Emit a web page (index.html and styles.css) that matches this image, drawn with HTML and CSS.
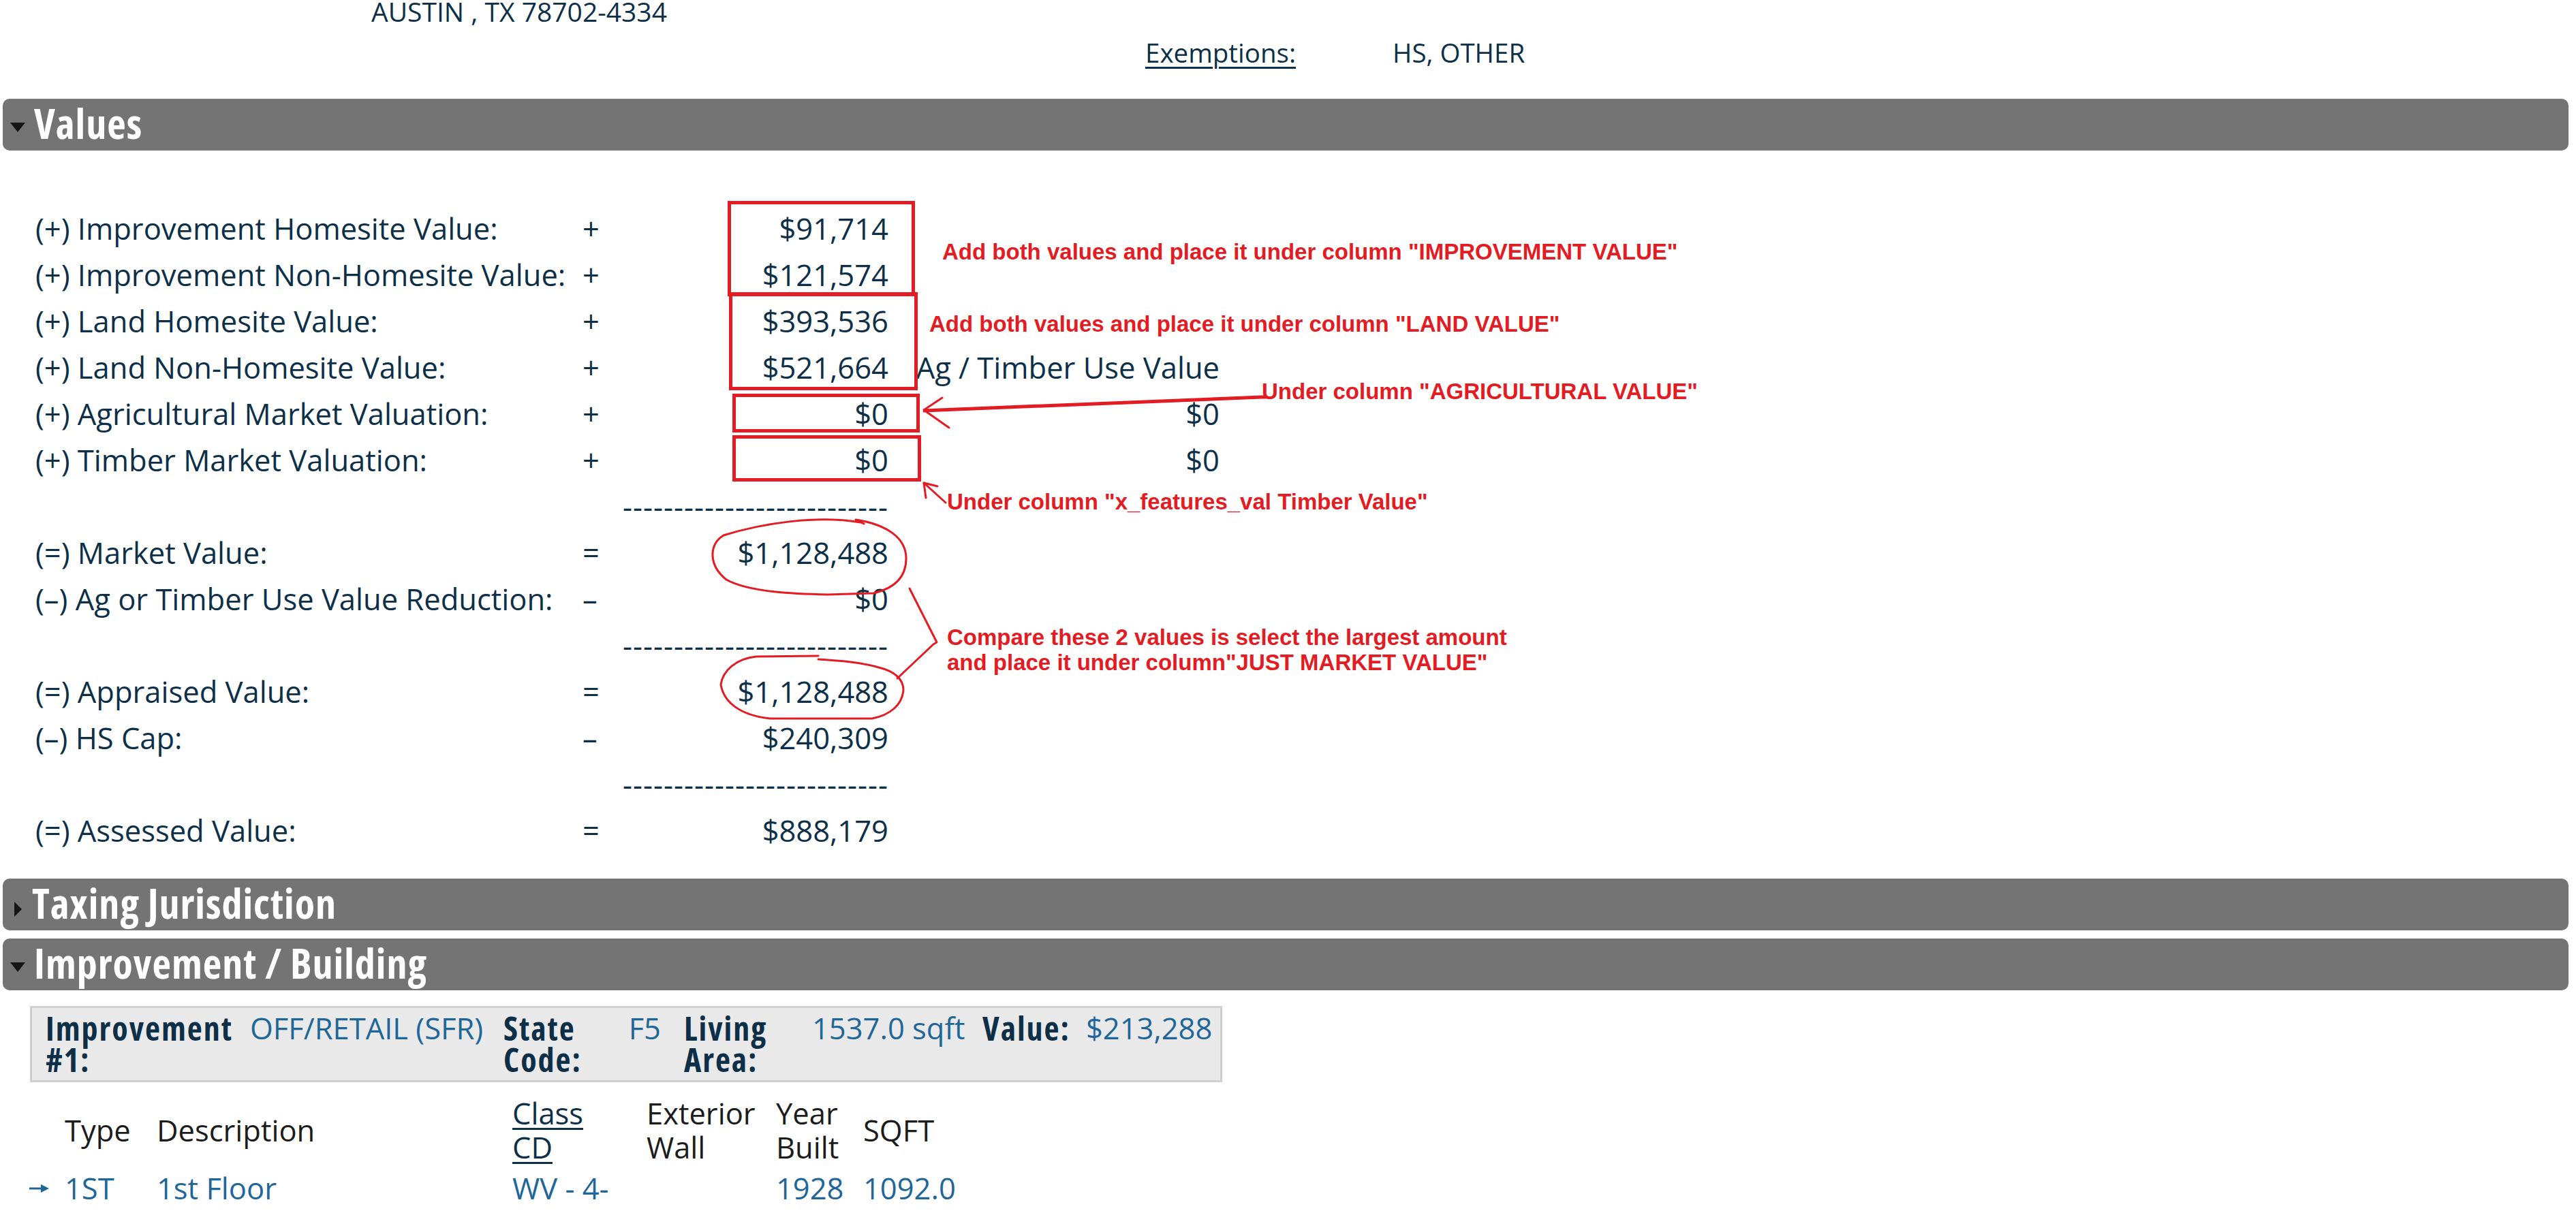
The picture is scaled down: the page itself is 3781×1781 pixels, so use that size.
FILE: index.html
```html
<!DOCTYPE html>
<html lang="en">
<head>
<meta charset="utf-8">
<title>Property Values</title>
<link rel="stylesheet" href="styles.css">
</head>
<body>
<div class="page">
  <div class="addr">AUSTIN , TX 78702-4334</div>
  <div class="exrow"><span class="exlabel">Exemptions:</span><span class="exval">HS, OTHER</span></div>

  <section class="panel">
    <div class="bar bar-values"><span class="tri-down"></span><h2>Values</h2></div>
    <div class="vtable">
      <div class="vrow"><span>(+) Improvement Homesite Value:</span><span class="op">+</span><span class="amt">$91,714</span><span class="extra"></span></div>
      <div class="vrow"><span>(+) Improvement Non-Homesite Value:</span><span class="op">+</span><span class="amt">$121,574</span><span class="extra"></span></div>
      <div class="vrow"><span>(+) Land Homesite Value:</span><span class="op">+</span><span class="amt">$393,536</span><span class="extra"></span></div>
      <div class="vrow"><span>(+) Land Non-Homesite Value:</span><span class="op">+</span><span class="amt">$521,664</span><span class="extra">Ag / Timber Use Value</span></div>
      <div class="vrow"><span>(+) Agricultural Market Valuation:</span><span class="op">+</span><span class="amt">$0</span><span class="extra">$0</span></div>
      <div class="vrow"><span>(+) Timber Market Valuation:</span><span class="op">+</span><span class="amt">$0</span><span class="extra">$0</span></div>
      <div class="vrow"><span></span><span class="op"></span><span class="amt dash">--------------------------</span><span class="extra"></span></div>
      <div class="vrow"><span>(=) Market Value:</span><span class="op">=</span><span class="amt">$1,128,488</span><span class="extra"></span></div>
      <div class="vrow"><span>(–) Ag or Timber Use Value Reduction:</span><span class="op">–</span><span class="amt">$0</span><span class="extra"></span></div>
      <div class="vrow"><span></span><span class="op"></span><span class="amt dash">--------------------------</span><span class="extra"></span></div>
      <div class="vrow"><span>(=) Appraised Value:</span><span class="op">=</span><span class="amt">$1,128,488</span><span class="extra"></span></div>
      <div class="vrow"><span>(–) HS Cap:</span><span class="op">–</span><span class="amt">$240,309</span><span class="extra"></span></div>
      <div class="vrow"><span></span><span class="op"></span><span class="amt dash">--------------------------</span><span class="extra"></span></div>
      <div class="vrow"><span>(=) Assessed Value:</span><span class="op">=</span><span class="amt">$888,179</span><span class="extra"></span></div>
    </div>
  </section>

  <section class="panel">
    <div class="bar bar-taxing"><span class="tri-right"></span><h2>Taxing Jurisdiction</h2></div>
  </section>

  <section class="panel">
    <div class="bar bar-impr"><span class="tri-down"></span><h2>Improvement / Building</h2></div>
    <div class="impbox">
      <div class="c c1 b">Improvement #1:</div>
      <div class="c c2 lnk">OFF/RETAIL (SFR)</div>
      <div class="c c3 b">State Code:</div>
      <div class="c c4 lnk">F5</div>
      <div class="c c5 b">Living Area:</div>
      <div class="c c6 lnk">1537.0 sqft</div>
      <div class="c c7 b">Value:</div>
      <div class="c c8 lnk">$213,288</div>
    </div>
    <div class="btable">
      <div class="brow bhead">
        <span></span>
        <span>Type</span>
        <span>Description</span>
        <span class="ulink">Class<br>CD</span>
        <span>Exterior<br>Wall</span>
        <span>Year<br>Built</span>
        <span>SQFT</span>
      </div>
      <div class="brow bdata">
        <span class="arrow"><svg width="31" height="14" viewBox="0 0 31 14"><path d="M1 7 H20" stroke="#1f6699" stroke-width="3"/><path d="M18 1 L30 7 L18 13 Z" fill="#1f6699"/></svg></span>
        <span>1ST</span>
        <span>1st Floor</span>
        <span>WV - 4-</span>
        <span></span>
        <span>1928</span>
        <span>1092.0</span>
      </div>
    </div>
  </section>
</div>

<div class="notes">
  <svg class="marks" width="3781" height="1781" viewBox="0 0 3781 1781">
    <g fill="none" stroke="#e31b23" stroke-width="5">
      <rect x="1070.5" y="297.5" width="270" height="135"/>
      <rect x="1072.5" y="431.5" width="272" height="139"/>
      <rect x="1077.5" y="580.5" width="270" height="52"/>
      <rect x="1077.5" y="641.5" width="272" height="63"/>
      <path d="M1355 603 L1852 583 L1858 583"/>
    </g>
    <g fill="none" stroke="#e31b23" stroke-width="3" stroke-linecap="round" stroke-linejoin="round">
      <path d="M1383 584 L1356 602 L1393 628"/>
      <path d="M1356 709 L1388 738"/>
      <path d="M1359 731 L1356 709 L1376 714"/>
      <path d="M1335 864 L1375 943 L1370 946 L1317 996"/>
      <path d="M1263 767 C1200 756 1120 768 1062 786 C1040 800 1040 830 1066 851 C1100 870 1170 872 1215 873 L1282 871 C1312 864 1330 848 1330 820 C1330 790 1302 770 1256 763 L1268 769"/>
      <path d="M1201 963 L1110 964 C1080 967 1061 985 1058 1005 C1062 1031 1086 1050 1130 1055 L1280 1055 C1306 1050 1325 1035 1326 1012 C1325 995 1310 985 1290 980 C1262 972 1232 970 1201 968"/>
    </g>
  </svg>
  <div class="note n1">Add both values and place it under column "IMPROVEMENT VALUE"</div>
  <div class="note n2">Add both values and place it under column "LAND VALUE"</div>
  <div class="note n3">Under column "AGRICULTURAL VALUE"</div>
  <div class="note n4">Under column "x_features_val Timber Value"</div>
  <div class="note n5">Compare these 2 values is select the largest amount<br>and place it under column"JUST MARKET VALUE"</div>
</div>
</body>
</html>
```

FILE: styles.css
```css
html, body {
  margin: 0;
  padding: 0;
  background: #ffffff;
  overflow: hidden;
}
body {
  font-family: "Open Sans", "Noto Sans", sans-serif;
  color: #0d2f48;
  position: relative;
}
.page {
  width: 3781px;
}

/* top address area */
.addr {
  height: 34px;
  line-height: 34px;
  font-size: 39px;
  padding-left: 545px;
  white-space: nowrap;
}
.exrow {
  margin-top: 13px;
  height: 60px;
  line-height: 60px;
  font-size: 38.5px;
  display: flex;
  padding-left: 1681px;
  white-space: nowrap;
}
.exlabel {
  width: 363px;
  text-decoration: underline;
  text-decoration-thickness: 3px;
  text-underline-offset: 6px;
}

/* section header bars */
.bar {
  display: flex;
  align-items: center;
  height: 76px;
  margin: 0 11px 0 4px;
  background: #747474;
  border-radius: 10px;
  padding-left: 11px;
}
.bar h2 {
  margin: 0 0 5px 15px;
  font-size: 60px;
  font-weight: 700;
  font-stretch: 75%;
  letter-spacing: 1px;
  color: #ffffff;
  line-height: 68px;
  white-space: nowrap;
}
.tri-down {
  width: 0;
  height: 0;
  border-left: 11px solid transparent;
  border-right: 11px solid transparent;
  border-top: 14px solid #151515;
  margin-top: 7px;
}
.tri-right {
  width: 0;
  height: 0;
  border-top: 11px solid transparent;
  border-bottom: 11px solid transparent;
  border-left: 11px solid #151515;
  margin: 14px 4px 0 6px;
}
.bar-values { margin-top: 38px; }
.bar-taxing { margin-top: 36px; }
.bar-taxing h2 { margin-left: 11px; }
.bar-impr { margin-top: 12px; }
.bar-values h2, .bar-impr h2 { margin-left: 13px; }

/* values table */
.vtable {
  margin: 81px 0 0 52px;
  font-size: 43.5px;
}
.vrow {
  display: grid;
  grid-template-columns: 803px 50px 399px 486px;
  height: 68px;
  line-height: 68px;
  white-space: nowrap;
}
.amt, .extra { text-align: right; }
.dash { letter-spacing: 1px; }

/* improvement summary box */
.impbox {
  margin: 23px 0 0 44px;
  width: fit-content;
  display: flex;
  align-items: flex-start;
  background: #e9e9e9;
  border: 3px solid #cfcfcf;
  padding: 7px 12px 7px 20px;
  font-size: 43.5px;
  line-height: 46px;
}
.c { flex: none; }
.b { font-weight: 700; font-stretch: 75%; font-size: 48px; letter-spacing: 2px; }
.lnk { color: #1f6699; white-space: nowrap; }
.c1 { width: 300px; }
.c2 { width: 372px; }
.c3 { width: 126px; }
.c4 { width: 105px; padding-right: 34px; text-align: right; }
.c5 { width: 188px; }
.c6 { width: 250px; }
.c7 { width: 152px; white-space: nowrap; }

/* building table */
.btable {
  margin: 21px 0 0 42px;
  font-size: 43.5px;
}
.brow {
  display: grid;
  grid-template-columns: 53px 135px 522px 197px 190px 128px 200px;
  line-height: 50px;
  white-space: nowrap;
}
.bhead {
  height: 100px;
  align-items: center;
  color: #1c1c1c;
}
.ulink {
  color: #0d2f48;
  text-decoration: underline;
  text-decoration-thickness: 3px;
  text-underline-offset: 5px;
}
.bdata {
  margin-top: 10px;
  height: 50px;
  align-items: center;
  color: #1f6699;
}
.arrow {
  display: flex;
  align-items: center;
}
.arrow svg { display: block; }

/* red annotation overlay */
.notes {
  position: absolute;
  left: 0;
  top: 0;
  width: 3781px;
  height: 1781px;
  pointer-events: none;
}
.marks {
  position: absolute;
  left: 0;
  top: 0;
}
.note {
  position: absolute;
  font-family: "Liberation Sans", Arial, sans-serif;
  font-weight: 700;
  font-size: 33px;
  line-height: 33px;
  color: #e31b23;
  white-space: nowrap;
}
.n1 { left: 1383px; top: 353px; }
.n2 { left: 1364px; top: 459px; }
.n3 { left: 1852px; top: 558px; }
.n4 { left: 1390px; top: 720px; }
.n5 { left: 1390px; top: 917px; line-height: 37px; }
```
